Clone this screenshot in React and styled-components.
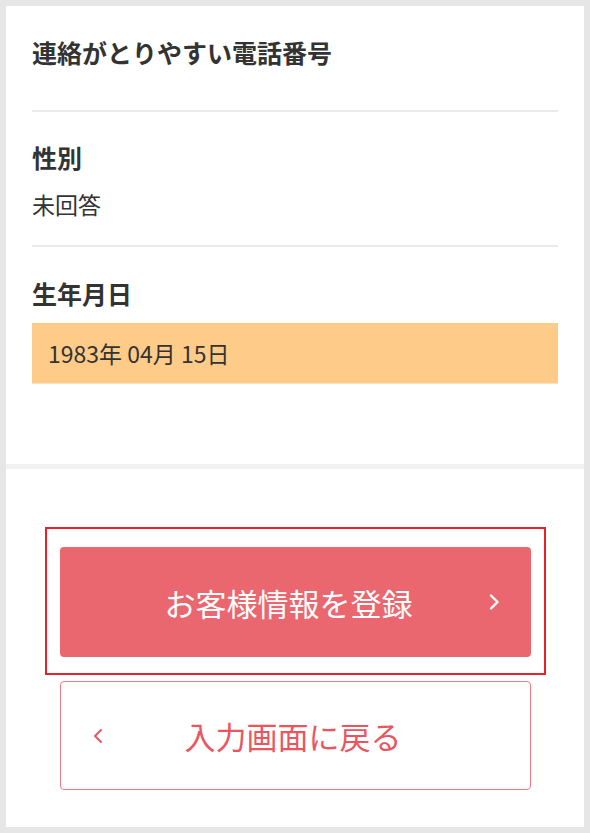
import React from "react";
import styled, { createGlobalStyle } from "styled-components";

const Global = createGlobalStyle`
  html, body {
    margin: 0;
    padding: 0;
    background: #e6e6e6;
  }
  body {
    font-family: "Noto Sans CJK JP", "Noto Sans", sans-serif;
    color: #333;
  }
`;

const Page = styled.div`
  padding: 6px;
`;

const Panel = styled.div`
  background: #fff;
  height: 821px;
  display: flex;
  flex-direction: column;
`;

const Info = styled.div`
  padding: 0 26px;
  height: 458px;
  border-bottom: 5px solid #f2f2f2;
`;

const Field = styled.div`
  padding-top: ${(p) => p.$top}px;
  padding-bottom: ${(p) => p.$bottom}px;
  border-bottom: ${(p) => (p.$line ? "2px solid #ebebeb" : "none")};
`;

const Label = styled.div`
  font-size: 25px;
  font-weight: 700;
  line-height: 36px;
  color: #333;
`;

const Value = styled.div`
  margin-top: 13px;
  font-size: 23px;
  line-height: 32px;
  color: #333;
`;

const DateBox = styled.div`
  margin-top: 12px;
  height: 61px;
  display: flex;
  align-items: center;
  padding: 0 16px;
  background: #fecc88;
  border-bottom: 1px solid #f6e3c6;
  font-size: 23px;
  color: #333;
  box-sizing: border-box;
`;

const Actions = styled.div`
  display: flex;
  flex-direction: column;
  align-items: center;
  padding-top: 58px;
`;

const Highlight = styled.div`
  width: 501px;
  box-sizing: border-box;
  border: 2px solid #e8212b;
  padding: 18px 13px 16px;
`;

const Button = styled.div`
  display: grid;
  grid-template-columns: 1fr auto 1fr;
  align-items: center;
  box-sizing: border-box;
  height: ${(p) => (p.$primary ? 110 : 109)}px;
  width: 471px;
  border-radius: 4px;
  font-size: 31px;
  background: ${(p) => (p.$primary ? "#eb6770" : "#fff")};
  color: ${(p) => (p.$primary ? "#fff" : "#e95660")};
  border: ${(p) => (p.$primary ? "none" : "1.5px solid #ef7b83")};
  padding: ${(p) => (p.$primary ? "0 31px 0 18px" : "0 35px 0 31px")};
  margin-top: ${(p) => (p.$primary ? 0 : 6)}px;
  span {
    grid-column: 2;
  }
`;

const Chevron = styled.svg`
  width: 12px;
  height: 18px;
  grid-column: ${(p) => (p.$left ? 1 : 3)};
  grid-row: 1;
  justify-self: ${(p) => (p.$left ? "start" : "end")};
`;

export default function App() {
  return (
    <>
      <Global />
      <Page>
        <Panel>
          <Info>
            <Field $top={28} $bottom={40} $line>
              <Label>連絡がとりやすい電話番号</Label>
            </Field>
            <Field $top={27} $bottom={25} $line>
              <Label>性別</Label>
              <Value>未回答</Value>
            </Field>
            <Field $top={28}>
              <Label>生年月日</Label>
              <DateBox>1983年 04月 15日</DateBox>
            </Field>
          </Info>
          <Actions>
            <Highlight>
              <Button $primary>
                <span>お客様情報を登録</span>
                <Chevron viewBox="0 0 12 18">
                  <path d="M3 2.5l6.5 6.5-6.5 6.5" fill="none" stroke="#fff" strokeWidth="2.4" strokeLinecap="round" strokeLinejoin="round" />
                </Chevron>
              </Button>
            </Highlight>
            <Button>
              <Chevron $left viewBox="0 0 12 18">
                <path d="M9 3L3 9l6 6" fill="none" stroke="#e95660" strokeWidth="2" strokeLinecap="round" strokeLinejoin="round" />
              </Chevron>
              <span>入力画面に戻る</span>
            </Button>
          </Actions>
        </Panel>
      </Page>
    </>
  );
}
